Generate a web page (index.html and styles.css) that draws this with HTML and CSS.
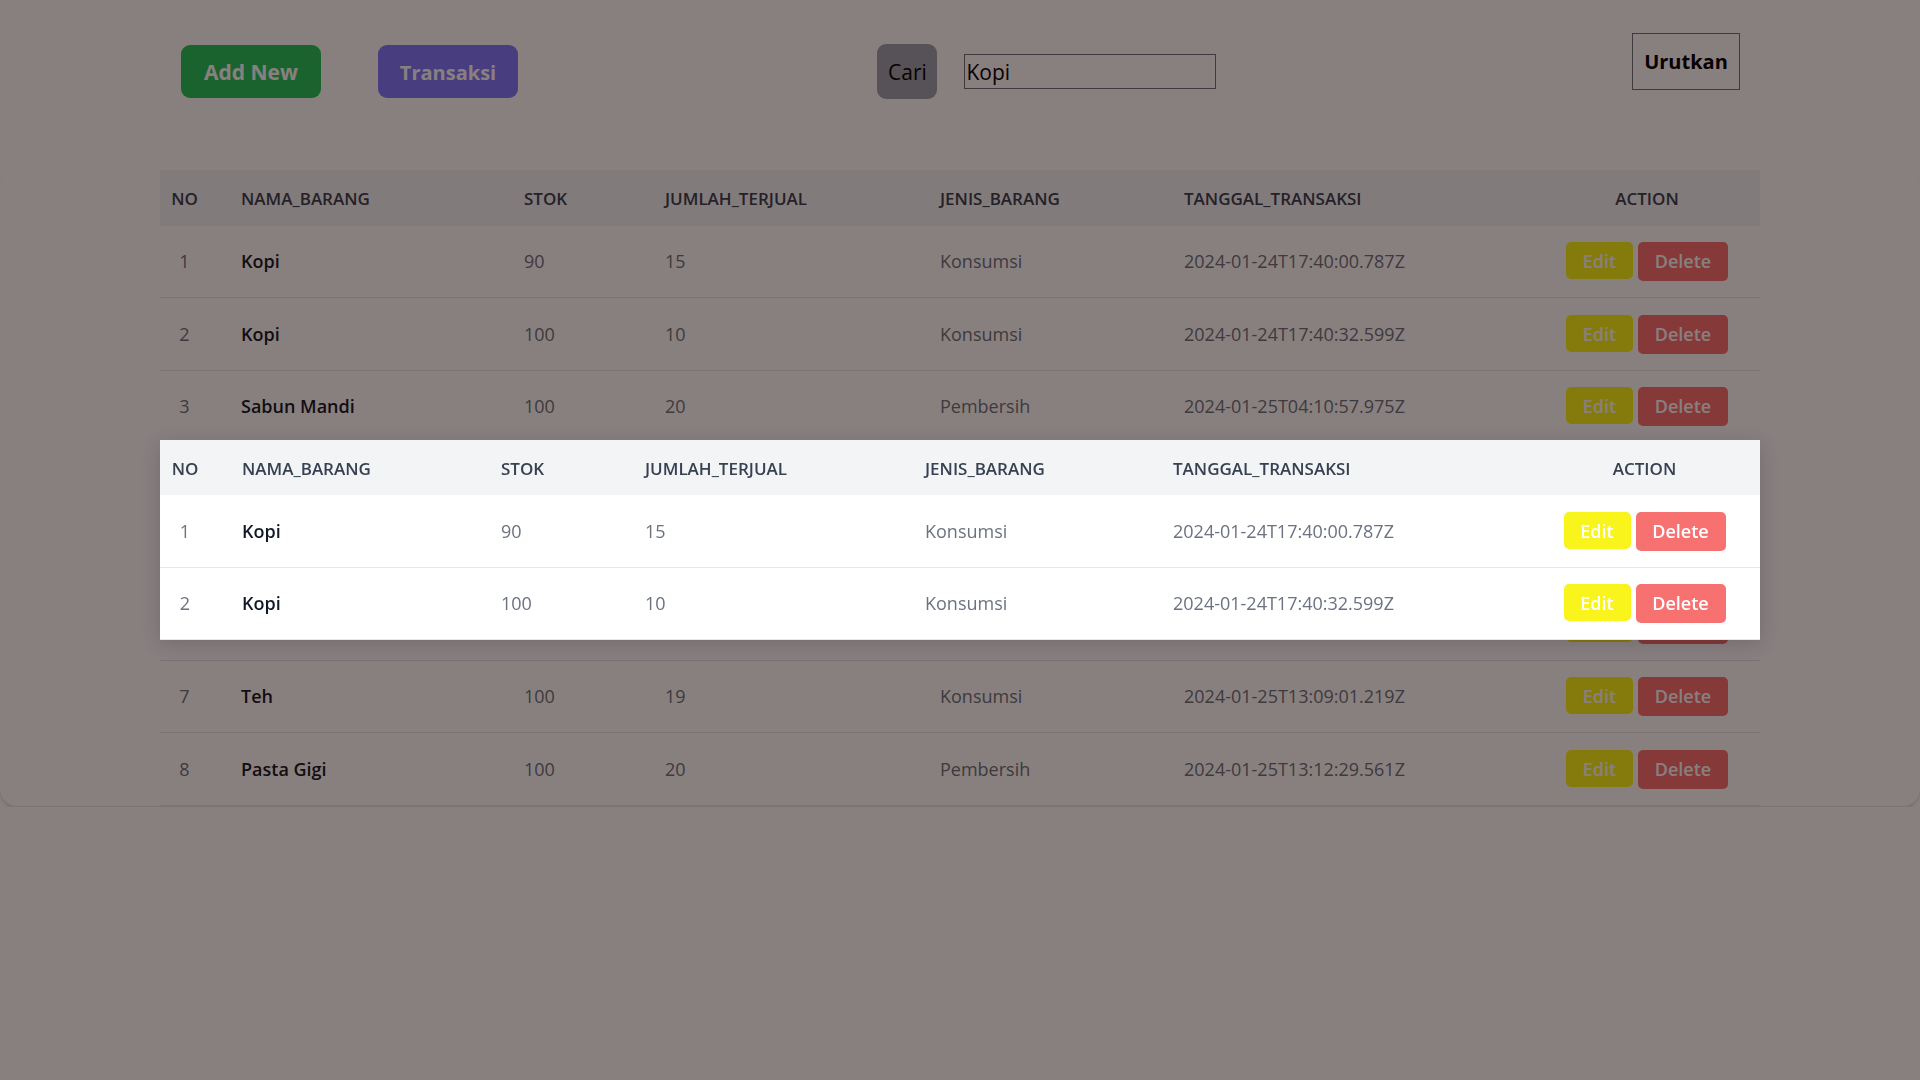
FILE: index.html
```html
<!DOCTYPE html>
<html lang="id">
<head>
<meta charset="utf-8">
<meta name="viewport" content="width=device-width, initial-scale=1">
<title>Data Barang</title>
<link rel="stylesheet" href="styles.css">
</head>
<body>
<main>
  <div class="toolbar">
    <div class="toolbar-actions">
      <button type="button" class="btn btn-add">Add New</button>
      <button type="button" class="btn btn-trans">Transaksi</button>
    </div>
    <form class="search">
      <button type="button" class="btn-search">Cari</button>
      <input class="search-input" type="text" value="Kopi" aria-label="Cari barang">
    </form>
    <button type="button" class="btn-sort">Urutkan</button>
  </div>

  <section class="card">
    <table class="items">
      <colgroup><col class="c-no"><col class="c-name"><col class="c-stock"><col class="c-sold"><col class="c-type"><col class="c-date"><col class="c-action"></colgroup>
      <thead>
        <tr><th>NO</th><th>NAMA_BARANG</th><th>STOK</th><th>JUMLAH_TERJUAL</th><th>JENIS_BARANG</th><th>TANGGAL_TRANSAKSI</th><th>ACTION</th></tr>
      </thead>
      <tbody>
        <tr><td>1</td><td>Kopi</td><td>90</td><td>15</td><td>Konsumsi</td><td>2024-01-24T17:40:00.787Z</td><td><div class="row-actions"><button type="button" class="edit">Edit</button><button type="button" class="delete">Delete</button></div></td></tr>
        <tr><td>2</td><td>Kopi</td><td>100</td><td>10</td><td>Konsumsi</td><td>2024-01-24T17:40:32.599Z</td><td><div class="row-actions"><button type="button" class="edit">Edit</button><button type="button" class="delete">Delete</button></div></td></tr>
        <tr><td>3</td><td>Sabun Mandi</td><td>100</td><td>20</td><td>Pembersih</td><td>2024-01-25T04:10:57.975Z</td><td><div class="row-actions"><button type="button" class="edit">Edit</button><button type="button" class="delete">Delete</button></div></td></tr>
        <tr><td></td><td></td><td></td><td></td><td></td><td></td><td></td></tr>
        <tr><td></td><td></td><td></td><td></td><td></td><td></td><td></td></tr>
        <tr><td></td><td></td><td></td><td></td><td></td><td></td><td><div class="row-actions"><button type="button" class="edit" aria-label="Edit"></button><button type="button" class="delete" aria-label="Delete"></button></div></td></tr>
        <tr><td>7</td><td>Teh</td><td>100</td><td>19</td><td>Konsumsi</td><td>2024-01-25T13:09:01.219Z</td><td><div class="row-actions"><button type="button" class="edit">Edit</button><button type="button" class="delete">Delete</button></div></td></tr>
        <tr><td>8</td><td>Pasta Gigi</td><td>100</td><td>20</td><td>Pembersih</td><td>2024-01-25T13:12:29.561Z</td><td><div class="row-actions"><button type="button" class="edit">Edit</button><button type="button" class="delete">Delete</button></div></td></tr>
      </tbody>
    </table>
  </section>
</main>

<div class="overlay">
  <div class="modal" role="dialog" aria-modal="true" aria-label="Hasil pencarian">
    <table class="items results">
      <colgroup><col class="c-no"><col class="c-name"><col class="c-stock"><col class="c-sold"><col class="c-type"><col class="c-date"><col class="c-action"></colgroup>
      <thead>
        <tr><th>NO</th><th>NAMA_BARANG</th><th>STOK</th><th>JUMLAH_TERJUAL</th><th>JENIS_BARANG</th><th>TANGGAL_TRANSAKSI</th><th>ACTION</th></tr>
      </thead>
      <tbody>
        <tr><td>1</td><td>Kopi</td><td>90</td><td>15</td><td>Konsumsi</td><td>2024-01-24T17:40:00.787Z</td><td><div class="row-actions"><button type="button" class="edit">Edit</button><button type="button" class="delete">Delete</button></div></td></tr>
        <tr><td>2</td><td>Kopi</td><td>100</td><td>10</td><td>Konsumsi</td><td>2024-01-24T17:40:32.599Z</td><td><div class="row-actions"><button type="button" class="edit">Edit</button><button type="button" class="delete">Delete</button></div></td></tr>
      </tbody>
    </table>
  </div>
</div>
</body>
</html>
```
FILE: styles.css
```css
* { box-sizing: border-box; }

body {
  margin: 0;
  background: #fff;
  color: #000;
  font-family: "Open Sans", "Noto Sans", sans-serif;
  font-size: 18px;
  line-height: 27px;
}

button, input { margin: 0; font: inherit; color: inherit; }
button { cursor: pointer; }

/* Toolbar */
.toolbar {
  display: grid;
  grid-template-columns: 12fr 13fr auto;
  align-items: start;
  max-width: 1600px;
  min-height: 170px;
  margin: 0 auto;
  padding: 33px 20px 0 21px;
  font-size: 21px;
}
.toolbar-actions { display: flex; gap: 57px; padding-top: 12px; }
.btn {
  width: 140px;
  height: 53px;
  padding: 2px 0 0;
  border: 0;
  border-radius: 9px;
  color: #fff;
  font-weight: 700;
}
.btn-add { background: #22c55e; }
.btn-trans { background: #7f78fd; font-size: 20px; }

.search { display: flex; align-items: center; gap: 27px; padding-top: 11px; }
.btn-search {
  width: 60px;
  height: 55px;
  padding: 2px 0 0;
  border: 0;
  border-radius: 9px;
  background: #9ca3af;
}
.search-input {
  width: 252px;
  height: 35px;
  padding: 0 1px;
  border: 1px solid #6b7280;
  background: #fff;
}
.btn-sort {
  width: 108px;
  height: 57px;
  padding: 0;
  border: 1px solid #6b7280;
  background: #fff;
  font-size: 20px;
  font-weight: 700;
}

/* Item tables */
.card {
  border-bottom: 1px solid #e5e7eb;
  border-radius: 18px;
  box-shadow: 0 2px 3px rgba(0, 0, 0, .14);
}
.items {
  width: 100%;
  max-width: 1600px;
  margin: 0 auto;
  border-collapse: separate;
  border-spacing: 0;
  table-layout: fixed;
  color: #6b7280;
  text-align: left;
}
.c-no { width: 49px; }
.c-name { width: 283px; }
.c-stock { width: 141px; }
.c-sold { width: 275px; }
.c-type { width: 244px; }
.c-date { width: 382px; }
.c-action { width: 226px; }

.results .c-no { width: 50px; }
.results .c-name { width: 259px; }
.results .c-stock { width: 144px; }
.results .c-sold { width: 280px; }
.results .c-type { width: 248px; }
.results .c-date { width: 388px; }
.results .c-action { width: 231px; }

.items th {
  height: 56px;
  padding: 1px 0 0 32px;
  background: #f3f4f6;
  color: #374151;
  font-size: 17px;
  font-weight: 600;
}
.results th { height: 55px; }
.items td {
  height: 72px;
  padding: 0 0 0 32px;
  border-bottom: 1px solid #e5e7eb;
}
.card tr:nth-child(even) td,
.results tr:nth-child(odd) td { height: 73px; }
.items th:first-child,
.items th:last-child { padding: 1px 0 0; text-align: center; }
.items td:first-child,
.items td:last-child { padding: 0; text-align: center; }
.items td:nth-child(2) { color: #111827; font-weight: 600; }

.row-actions { display: flex; justify-content: center; gap: 5px; }
.edit, .delete {
  padding: 0;
  border: 0;
  border-radius: 5px;
  color: #fff;
  font-weight: 600;
}
.edit { width: 67px; height: 37px; padding-top: 2px; background: #f9f41b; }
.delete { width: 90px; height: 39px; background: #f87171; }

/* Search result dialog */
.overlay {
  position: fixed;
  inset: 0;
  display: flex;
  align-items: center;
  justify-content: center;
  background: rgba(17, 1, 0, .5);
}
.modal {
  width: 100%;
  max-width: 1600px;
  background: #fff;
  box-shadow: 0 4px 18px rgba(0, 0, 0, .15);
}
```
